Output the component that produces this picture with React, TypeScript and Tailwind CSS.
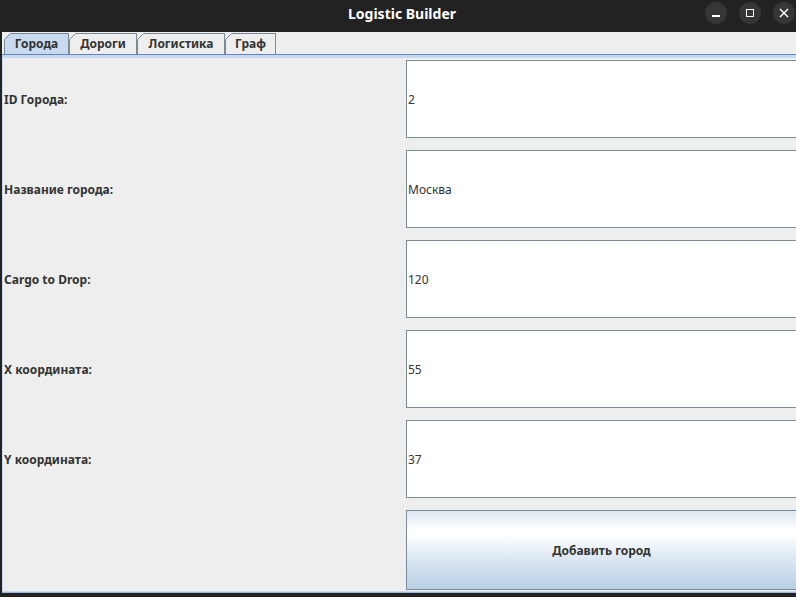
import React from 'react'

const font = { fontFamily: '"Noto Sans", "Open Sans", sans-serif' }

const tabs = [
  { label: 'Города', w: 65, active: true },
  { label: 'Дороги', w: 68, active: false },
  { label: 'Логистика', w: 88, active: false },
  { label: 'Граф', w: 51, active: false },
]

const fields = [
  { label: 'ID Города:', value: '2' },
  { label: 'Название города:', value: 'Москва' },
  { label: 'Cargo to Drop:', value: '120' },
  { label: 'X координата:', value: '55' },
  { label: 'Y координата:', value: '37' },
]

function Tab({ label, w, active }: { label: string; w: number; active: boolean }) {
  const h = 21
  return (
    <div
      className={`relative flex items-center justify-center text-[12px] font-bold text-[#333333] ${active ? 'bg-[#c8daf0]' : 'bg-[#eeeeee]'}`}
      style={{ width: w, height: h, clipPath: 'polygon(0 6px, 6px 0, 100% 0, 100% 100%, 0 100%)' }}
    >
      <svg className="absolute inset-0" width={w} height={h}>
        <path d={`M0.5 ${h} V6.5 L6.5 0.5 H${w - 0.5} V${h}`} fill="none" stroke="#7a8a99" strokeWidth="1" />
      </svg>
      <span className="relative">{label}</span>
    </div>
  )
}

export default function App() {
  return (
    <div className="w-[796px] h-[597px] overflow-hidden bg-[#222222] flex flex-col" style={font}>
      {/* Title bar */}
      <div className="h-[32px] shrink-0 relative flex items-center justify-center">
        <span className="text-white font-bold text-[14px] -mt-[6px] ml-[8px]">Logistic Builder</span>
        <div className="absolute right-[1px] top-[2px] flex gap-[12px]">
          <div className="w-[22px] h-[22px] rounded-full bg-[#363636] flex items-center justify-center">
            <div className="w-[8px] h-[1.5px] bg-white mt-[6px]" />
          </div>
          <div className="w-[22px] h-[22px] rounded-full bg-[#363636] flex items-center justify-center">
            <div className="w-[8px] h-[8px] border-[1.5px] border-white" />
          </div>
          <div className="w-[22px] h-[22px] rounded-full bg-[#363636] flex items-center justify-center">
            <svg width="10" height="10" viewBox="0 0 10 10">
              <path d="M1 1 L9 9 M9 1 L1 9" stroke="white" strokeWidth="1.5" />
            </svg>
          </div>
        </div>
      </div>

      {/* Window body */}
      <div className="flex-1 ml-[2px] mb-[4px] bg-[#eeeeee] flex flex-col">
        <div className="flex pl-[2px] pt-[1px] h-[22px] shrink-0">
          {tabs.map((t) => (
            <Tab key={t.label} {...t} />
          ))}
        </div>
        <div className="h-[1px] bg-[#6382bf] shrink-0" />
        <div className="h-[3px] bg-[#c8daf0] shrink-0" />

        <div className="flex-1 flex flex-col gap-[12px] pt-[2px] border-l border-[#c8daf0]">
          {fields.map((f) => (
            <div key={f.label} className="flex h-[78px] shrink-0">
              <div className="w-[403px] pl-[1px] pt-[2px] flex items-center text-[12px] font-bold text-[#333333]">
                {f.label}
              </div>
              <div className="flex-1 bg-white border border-r-0 border-[#7a8a99] flex items-center pl-[1px] pt-[2px] text-[12px] text-[#333333]">
                {f.value}
              </div>
            </div>
          ))}
          <div className="flex h-[80px] shrink-0">
            <div className="w-[403px]" />
            <div className="flex-1 border border-r-0 border-[#7a8a99] bg-[linear-gradient(to_bottom,#dde8f3_0%,#ffffff_25%,#ffffff_30%,#dde8f3_60%,#b8cfe5_100%)] flex items-center justify-center pt-[2px] text-[12px] font-bold text-[#333333]">
              Добавить город
            </div>
          </div>
        </div>
        <div className="h-[1px] bg-[#c8daf0] shrink-0" />
        <div className="h-[1px] bg-[#9fb6d8] shrink-0" />
      </div>
    </div>
  )
}
